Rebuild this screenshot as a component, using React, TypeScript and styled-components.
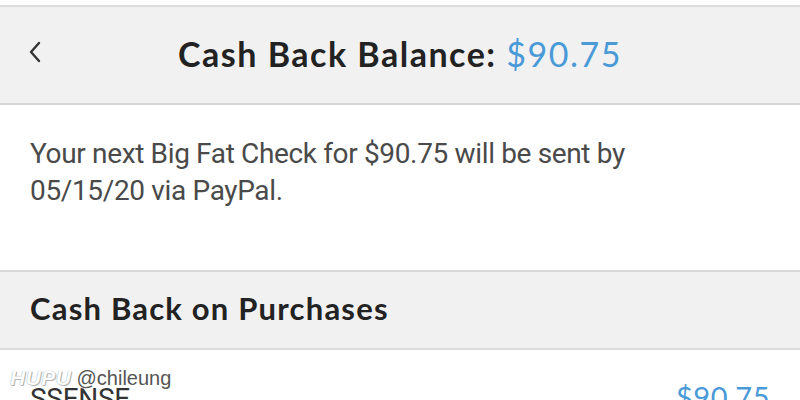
import React from "react";
import styled, { createGlobalStyle } from "styled-components";

const GlobalStyle = createGlobalStyle`
  html, body {
    margin: 0;
    padding: 0;
    background: #ffffff;
  }
  body {
    font-family: "Lato", "Liberation Sans", sans-serif;
  }
`;

function App() {
  return (
    <>
      <GlobalStyle />
      <Page>
        <TopBar>
          <BackButton aria-label="back">
            <svg width="14" height="22" viewBox="0 0 14 22">
              <path
                d="M11 2 L3 11 L11 20"
                fill="none"
                stroke="#333"
                strokeWidth="2.4"
                strokeLinecap="round"
                strokeLinejoin="round"
              />
            </svg>
          </BackButton>
          <Title>
            Cash Back Balance: <Amount>$90.75</Amount>
          </Title>
        </TopBar>
        <Notice>
          <NoticeText>
            Your next Big Fat Check for $90.75 will be sent by
            <br />
            05/15/20 via PayPal.
          </NoticeText>
        </Notice>
        <SectionHeader>Cash Back on Purchases</SectionHeader>
        <Row>
          <StoreName>SSENSE</StoreName>
          <RowAmount>$90.75</RowAmount>
        </Row>
        <Watermark>
          <WatermarkBrand>HUPU</WatermarkBrand>
          <WatermarkUser>@chileung</WatermarkUser>
        </Watermark>
      </Page>
    </>
  );
}

export default App;

const Page = styled.div`
  position: relative;
  width: 800px;
  height: 400px;
  overflow: hidden;
  padding-top: 5px;
  box-sizing: border-box;
  background: #ffffff;
`;

const TopBar = styled.header`
  position: relative;
  display: flex;
  align-items: center;
  justify-content: center;
  height: 96px;
  background: #f1f1f1;
  border-top: 2px solid #dcdcdc;
  border-bottom: 2px solid #d6d6d6;
`;

const BackButton = styled.span`
  position: absolute;
  left: 28px;
  top: 34px;
  display: flex;
`;

const Title = styled.h1`
  margin: 0 0 4px 0;
  font-family: "Lato", "Liberation Sans", sans-serif;
  font-weight: 700;
  font-size: 34px;
  letter-spacing: 1.5px;
  color: #222222;
`;

const Amount = styled.span`
  font-weight: 400;
  color: #4a9ad8;
`;

const Notice = styled.section`
  height: 165px;
  padding: 30px 30px 0;
  box-sizing: border-box;
`;

const NoticeText = styled.p`
  margin: 0;
  font-family: "Roboto", "Liberation Sans", sans-serif;
  font-weight: 400;
  font-size: 28px;
  line-height: 37px;
  letter-spacing: -0.35px;
  color: #4a4a4a;
`;

const SectionHeader = styled.h2`
  display: flex;
  align-items: center;
  height: 80px;
  margin: 0;
  padding: 0 30px 4px;
  box-sizing: border-box;
  background: #f1f1f1;
  border-top: 2px solid #d8d8d8;
  border-bottom: 2px solid #dcdcdc;
  font-family: "Lato", "Liberation Sans", sans-serif;
  font-weight: 700;
  font-size: 31px;
  letter-spacing: 1.2px;
  color: #222222;
`;

const Row = styled.div`
  display: flex;
  justify-content: space-between;
  align-items: flex-start;
  padding: 29px 30px 0;
`;

const StoreName = styled.span`
  font-family: "Roboto", "Liberation Sans", sans-serif;
  font-size: 28px;
  letter-spacing: -0.3px;
  color: #333333;
  margin-top: 3px;
`;

const RowAmount = styled.span`
  font-family: "Lato", "Liberation Sans", sans-serif;
  font-size: 29px;
  letter-spacing: 0.5px;
  color: #4a9ad8;
`;

const Watermark = styled.div`
  position: absolute;
  left: 10px;
  top: 366px;
  display: flex;
  align-items: baseline;
  gap: 5px;
  font-family: "Liberation Sans", sans-serif;
  font-size: 20px;
`;

const WatermarkBrand = styled.span`
  font-style: italic;
  font-weight: 700;
  font-size: 21px;
  color: #ffffff;
  text-shadow: 0 0 1px #888, 1px 1px 0 #bbb;
  letter-spacing: 0.5px;
`;

const WatermarkUser = styled.span`
  color: #555555;
  text-shadow: 0 0 2px #ffffff, 0 0 2px #ffffff;
`;
